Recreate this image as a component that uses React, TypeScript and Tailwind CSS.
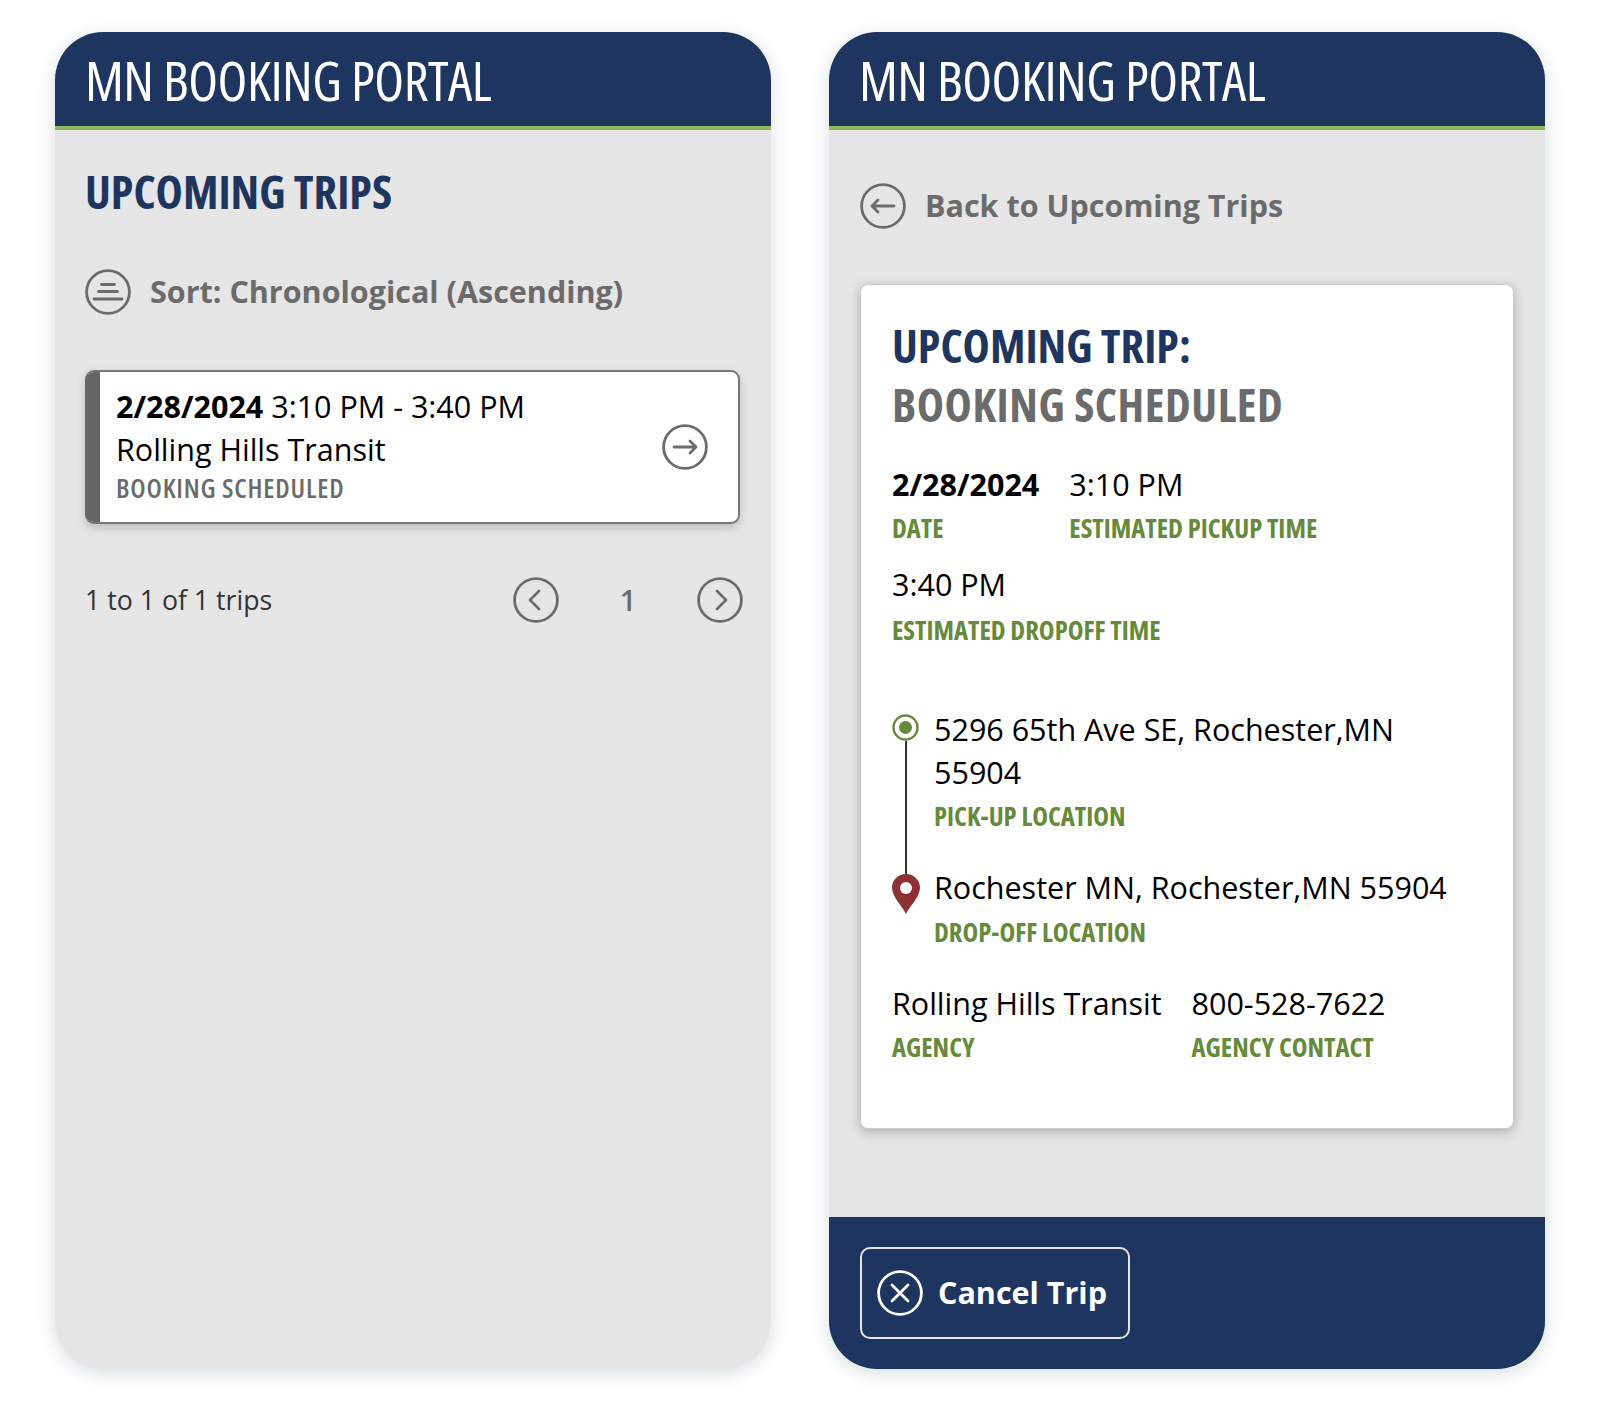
const navy = "text-[#1e3560]";

const Circle = ({ children, color = "#6b6b6b", size = 46 }: { children: React.ReactNode; color?: string; size?: number }) => (
  <svg width={size} height={size} viewBox="0 0 46 46" fill="none" stroke={color} strokeWidth="2.8" strokeLinecap="round" strokeLinejoin="round" className="shrink-0">
    <circle cx="23" cy="23" r="21.4" />
    {children}
  </svg>
);

const Header = () => (
  <header className="h-[98px] shrink-0 bg-[#1e3560] border-b-[4px] border-[#8bb858] pl-[30px] flex items-center">
    <h1 className="text-white text-[54.6px] leading-none font-normal [font-stretch:75%] tracking-[-0.5px] pt-[3px]">MN BOOKING PORTAL</h1>
  </header>
);

const Label = ({ children }: { children: React.ReactNode }) => (
  <div className="text-[#668a3a] text-[26.6px] leading-[32px] font-bold [font-stretch:75%]">{children}</div>
);

const UpcomingTrips = () => (
  <div className="w-[716px] h-[1337px] rounded-[48px] overflow-hidden bg-[#e6e6e6] flex flex-col shadow-[0_4px_18px_rgba(120,150,160,0.3)]">
    <Header />
    <div className="pl-[30px] flex flex-col">
      <h2 className={`${navy} text-[46px] leading-[60px] font-bold [font-stretch:75%] mt-[31px]`}>UPCOMING TRIPS</h2>
      <div className="flex items-center gap-[19px] mt-[48px] h-[46px]">
        <Circle>
          <path d="M16.5 15.5h13M13.5 22.5h19M9 30h28" />
        </Circle>
        <span className="text-[#6b6b6b] text-[30.5px] font-bold">Sort: Chronological (Ascending)</span>
      </div>
      <div className="mt-[55px] w-[655px] h-[154px] flex bg-white rounded-[9px] overflow-hidden border-t-[2px] border-b-[2px] border-r-[2px] border-[#777] shadow-[0_4px_10px_rgba(0,0,0,0.18)]">
        <div className="w-[15px] bg-[#666] shrink-0" />
        <div className="flex-1 pl-[16px] pt-[13px] text-black">
          <div className="text-[30.5px] leading-[43px]"><b className="font-bold [font-stretch:96%]">2/28/2024</b> 3:10 PM - 3:40 PM</div>
          <div className="text-[30.5px] leading-[43px]">Rolling Hills Transit</div>
          <div className="text-[#6b6b6b] text-[27px] leading-[34px] font-semibold [font-stretch:75%] tracking-[0.8px]">BOOKING SCHEDULED</div>
        </div>
        <div className="flex items-center pr-[30px]">
          <Circle>
            <path d="M12 23h22M28 17l6 6-6 6" />
          </Circle>
        </div>
      </div>
      <div className="mt-[53px] flex items-center h-[46px] w-[658px]">
        <span className="text-[#333] text-[26.7px] flex-1">1 to 1 of 1 trips</span>
        <Circle><path d="M26 14l-9 9 9 9" /></Circle>
        <span className="text-[#6b6b6b] text-[29px] font-semibold w-[138px] text-center">1</span>
        <Circle><path d="M20 14l9 9-9 9" /></Circle>
      </div>
    </div>
  </div>
);

const TripDetail = () => (
  <div className="w-[716px] h-[1337px] rounded-[48px] overflow-hidden bg-[#e6e6e6] flex flex-col shadow-[0_4px_18px_rgba(120,150,160,0.3)]">
    <Header />
    <div className="flex-1 pl-[31px] flex flex-col">
      <div className="flex items-center gap-[19px] mt-[53px] h-[46px]">
        <Circle>
          <path d="M34 23H12M18 17l-6 6 6 6" />
        </Circle>
        <span className="text-[#6b6b6b] text-[30.5px] font-bold">Back to Upcoming Trips</span>
      </div>
      <div className="mt-[55px] w-[654px] h-[845px] bg-white rounded-[8px] border border-[#ccc] shadow-[0_3px_12px_rgba(0,0,0,0.25)] pl-[31px] pt-[31px]">
        <h2 className={`${navy} text-[46px] leading-[59px] font-bold [font-stretch:75%]`}>UPCOMING TRIP:</h2>
        <div className="text-[#6b6b6b] text-[46px] leading-[59px] font-bold [font-stretch:75%] tracking-[0.55px]">BOOKING SCHEDULED</div>
        <div className="flex gap-[30px] mt-[27px]">
          <div>
            <div className="text-[30.5px] leading-[46px] font-bold text-black [font-stretch:96%]">2/28/2024</div>
            <div className="mt-[5px]"><Label>DATE</Label></div>
          </div>
          <div>
            <div className="text-[30.5px] leading-[46px] text-black">3:10 PM</div>
            <div className="mt-[5px]"><Label>ESTIMATED PICKUP TIME</Label></div>
          </div>
        </div>
        <div className="mt-[17px]">
          <div className="text-[30.5px] leading-[46px] text-black">3:40 PM</div>
          <div className="mt-[7px]"><Label>ESTIMATED DROPOFF TIME</Label></div>
        </div>
        <div className="mt-[62px] flex gap-[15px]">
          <div className="w-[27px] shrink-0 flex flex-col items-center pt-[6px]">
            <svg width="27" height="27" viewBox="0 0 27 27" className="shrink-0">
              <circle cx="13.5" cy="13.5" r="12" fill="none" stroke="#668a3a" strokeWidth="2.4" />
              <circle cx="13.5" cy="13.5" r="6.5" fill="#668a3a" />
            </svg>
            <div className="w-[2px] h-[133px] bg-[#333]" />
            <svg width="28" height="40" viewBox="0 0 28 40" className="shrink-0">
              <path d="M14 40C11 33 0 23 0 13.5 0 6 6.3 0 14 0s14 6 14 13.5C28 23 17 33 14 40z" fill="#8f3035" />
              <circle cx="14" cy="14" r="6" fill="#fff" />
            </svg>
          </div>
          <div className="flex flex-col text-black text-[30.5px] leading-[43px]">
            <div>5296 65th Ave SE, Rochester,MN<br />55904</div>
            <div className="mt-[6px]"><Label>PICK-UP LOCATION</Label></div>
            <div className="mt-[34px]">Rochester MN, Rochester,MN 55904</div>
            <div className="mt-[7px]"><Label>DROP-OFF LOCATION</Label></div>
          </div>
        </div>
        <div className="flex gap-[30px] mt-[34px]">
          <div>
            <div className="text-[30.5px] leading-[43px] text-black">Rolling Hills Transit</div>
            <div className="mt-[6px]"><Label>AGENCY</Label></div>
          </div>
          <div>
            <div className="text-[30.5px] leading-[43px] text-black">800-528-7622</div>
            <div className="mt-[6px]"><Label>AGENCY CONTACT</Label></div>
          </div>
        </div>
      </div>
    </div>
    <footer className="h-[152px] shrink-0 bg-[#1e3560] pl-[31px] pt-[30px]">
      <button className="w-[270px] h-[92px] rounded-[10px] border-2 border-[#e6e6e6] flex items-center gap-[15px] pl-[15px]">
        <Circle color="#ffffff">
          <path d="M15 15l16 16M31 15L15 31" />
        </Circle>
        <span className="text-white text-[30.5px] font-bold">Cancel Trip</span>
      </button>
    </footer>
  </div>
);

export default function App() {
  return (
    <div className="w-[1600px] h-[1402px] bg-white pt-[32px] pl-[55px] flex gap-[58px] font-['Open_Sans',sans-serif]">
      <UpcomingTrips />
      <TripDetail />
    </div>
  );
}
